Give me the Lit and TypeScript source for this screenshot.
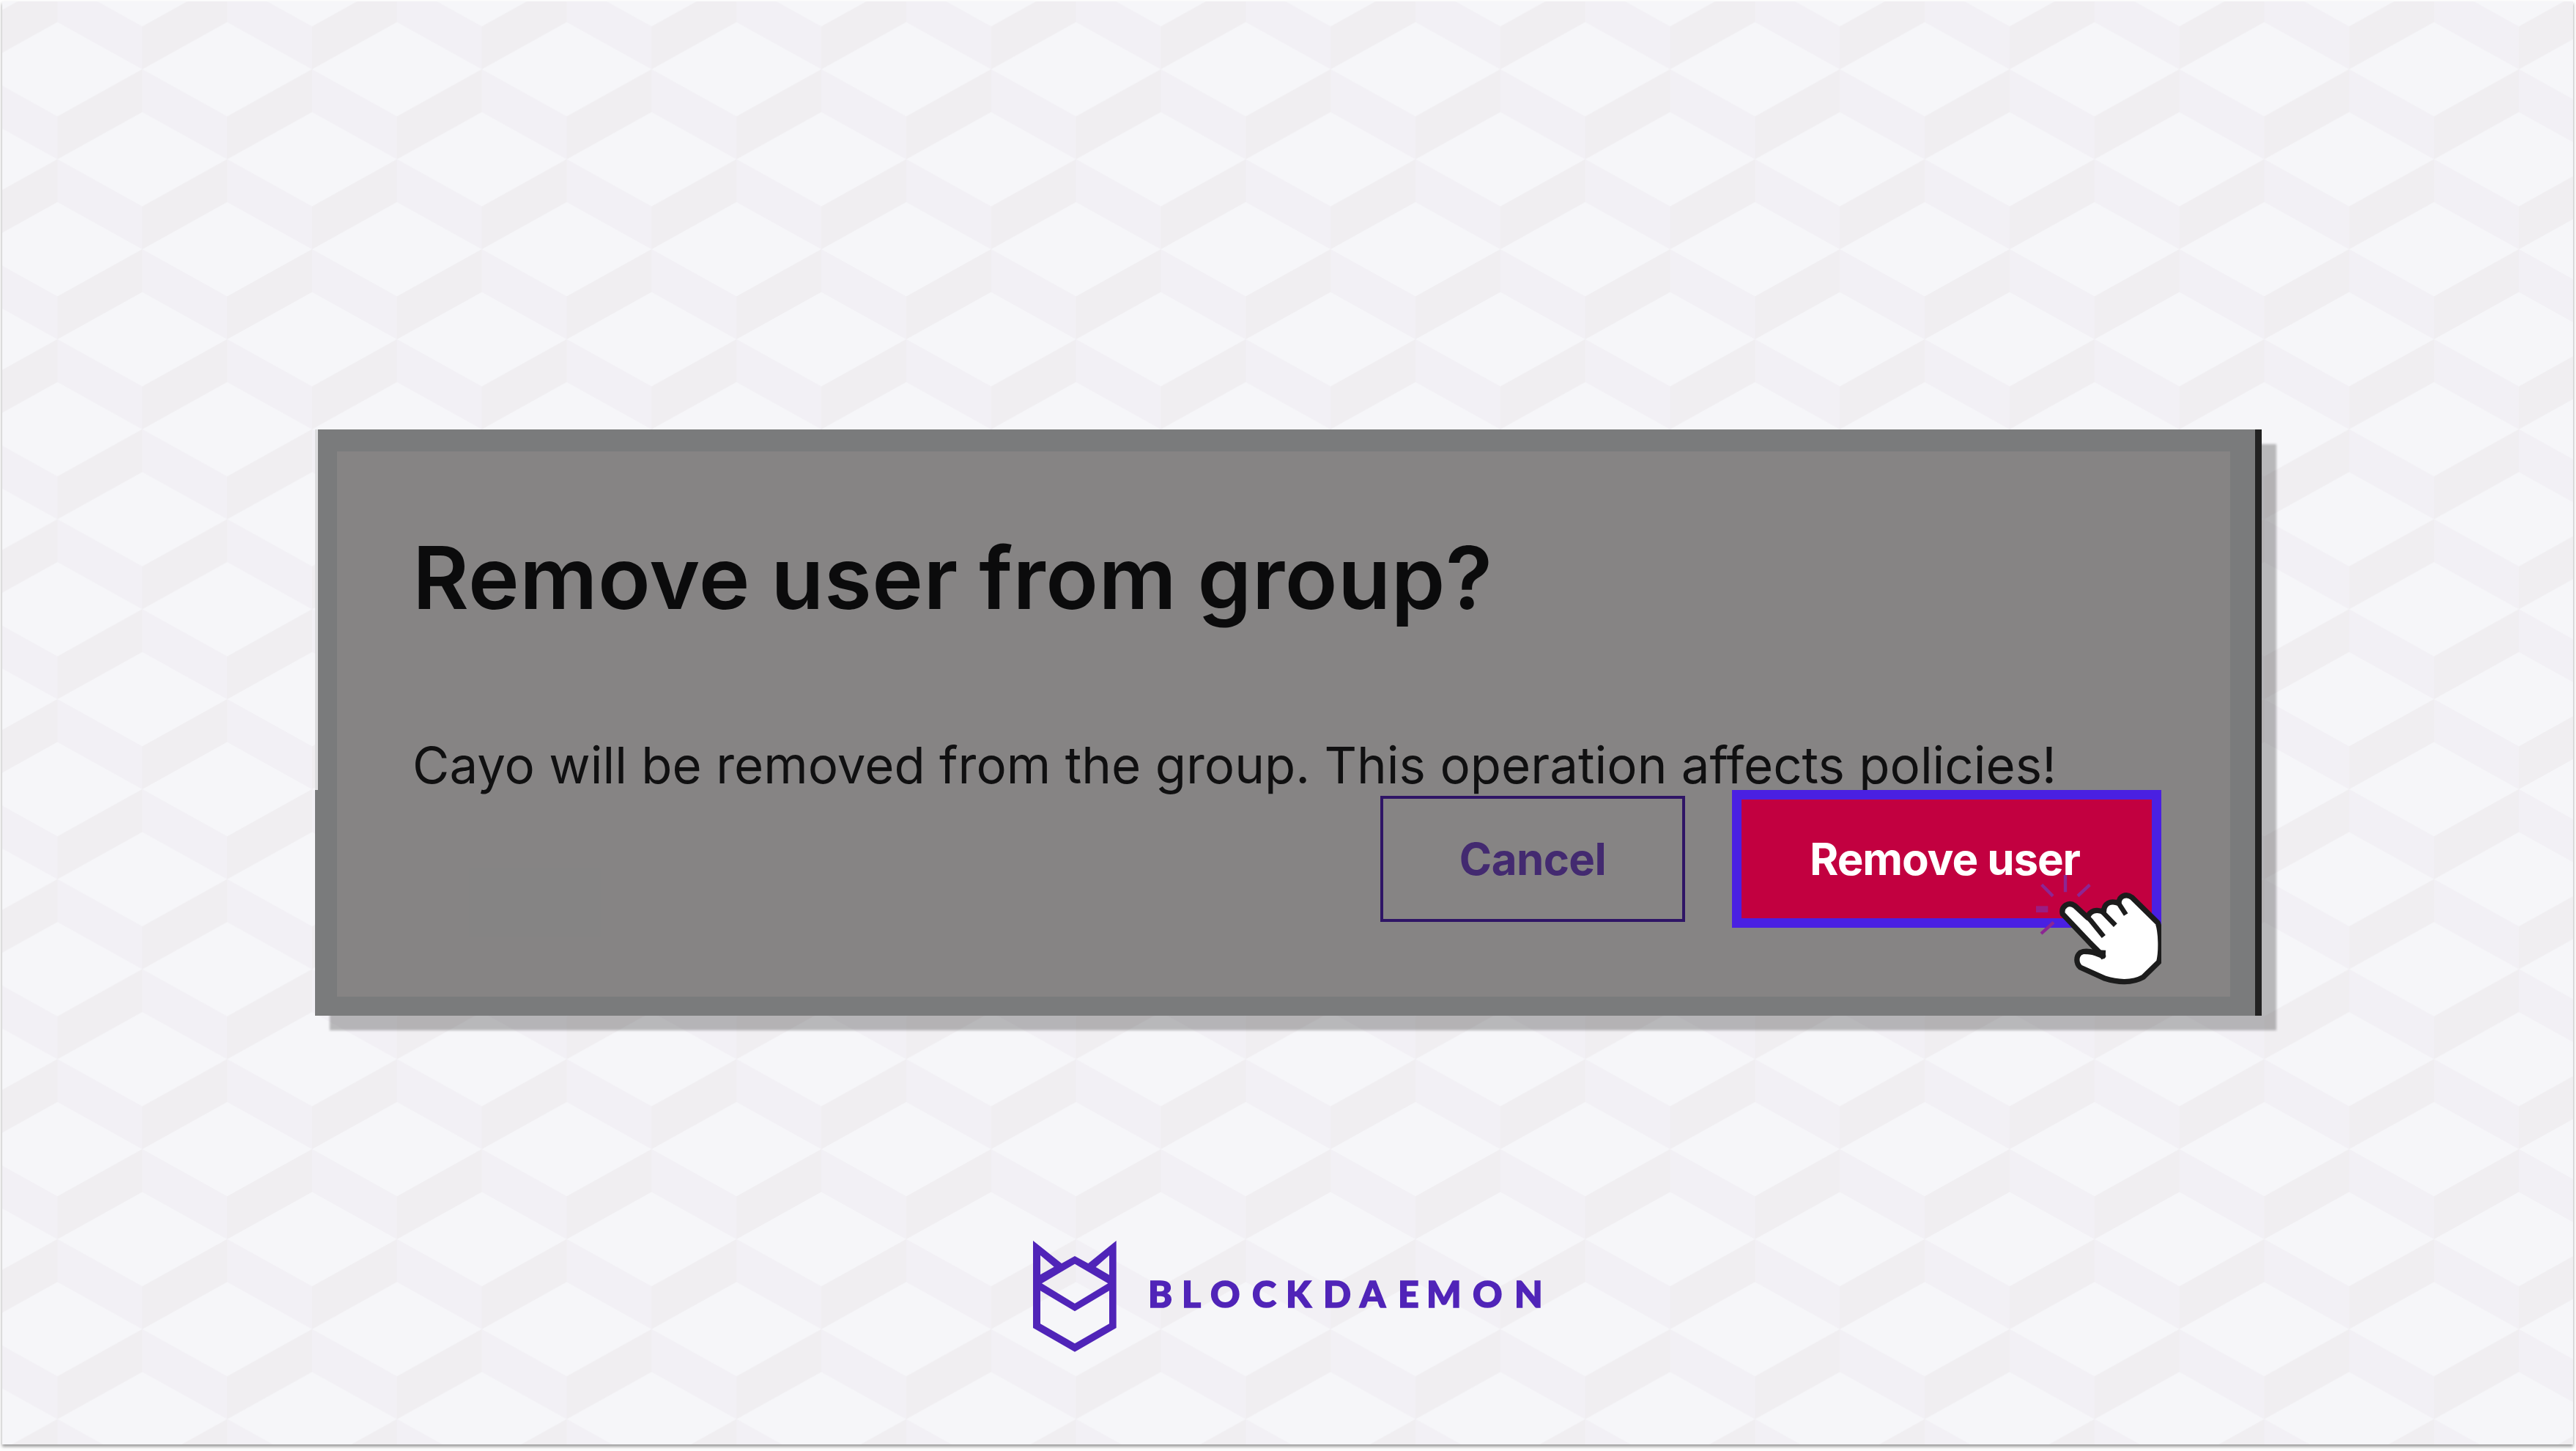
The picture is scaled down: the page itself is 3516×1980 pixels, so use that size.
import { LitElement, html, css } from 'lit';
import { property, customElement } from 'lit/decorators.js';

@customElement('cube-pattern')
class CubePattern extends LitElement {
  static styles = css`
    :host {
      display: block;
    }
    .canvas {
      display: block;
      width: 100%;
      height: 100%;
    }
    .base {
      fill: #f6f6f9;
    }
    .left-face {
      fill: #f2f0f5;
    }
    .right-face {
      fill: #f0eef1;
    }
  `;

  render() {
    return html`
      <svg class="canvas">
        <defs>
          <pattern id="cubes" x="75.4" y="215.3" width="231.7" height="245.6" patternUnits="userSpaceOnUse">
            <rect class="base" width="232" height="246" />
            <path class="left-face" d="M0 0L115.85 64.3V122.8L0 58.5Z M115.85 122.8L231.7 187.1V245.6L115.85 181.3Z" />
            <path class="right-face" d="M231.7 0L115.85 64.3V122.8L231.7 58.5Z M115.85 122.8L0 187.1V245.6L115.85 181.3Z" />
          </pattern>
        </defs>
        <rect width="100%" height="100%" fill="url(#cubes)" />
      </svg>
    `;
  }
}

@customElement('hand-cursor')
class HandCursor extends LitElement {
  static styles = css`
    :host {
      display: block;
      width: 190px;
      height: 170px;
    }
    .icon {
      display: block;
      width: 100%;
      height: 100%;
      fill: none;
      stroke-linejoin: round;
    }
    .ray {
      stroke: #8c2693;
      stroke-width: 13;
    }
    .ray.wide {
      stroke: #9a1d83;
      stroke-width: 26;
    }
    .hand {
      fill: #fff;
      stroke: #1c1c1c;
      stroke-width: 22;
    }
    .gap {
      stroke: #1c1c1c;
      stroke-width: 20;
    }
  `;

  render() {
    return html`
      <svg class="icon" viewBox="0 0 570 510">
        <path class="ray" d="M177 12V82M80 52L126 98M277 52L228 98M129 206L78 252" />
        <path class="ray wide" d="M57 152H106" />
        <path
          class="hand"
          d="M166 172C158 140 190 120 216 138L268 186C278 158 304 150 334 164C334 128 362 114 396 128C396 98 426 86 450 104L556 208C570 250 570 330 560 368L496 430C450 456 390 452 340 436L238 390C220 372 220 345 238 330C262 318 290 326 332 344L276 288Z"
        />
        <path class="gap" d="M262 178L284 202L334 264M328 162L382 218M394 126L425 174M276 288L334 352M250 326L342 330" />
      </svg>
    `;
  }
}

@customElement('confirm-dialog')
class ConfirmDialog extends LitElement {
  @property({ type: String }) heading = '';
  @property({ type: String }) message = '';

  static styles = css`
    :host {
      display: block;
      box-sizing: border-box;
      width: 2657px;
      height: 800px;
      padding: 30px 34px 26px 30px;
      border-right: 9px solid #222;
      background: linear-gradient(#dcdcde 0 492px, #7a7b7c 0) left / 4px 100% no-repeat, #7a7b7c;
      box-shadow: 20px 20px 3px rgba(0, 0, 0, 0.25);
      font-family: Inter, sans-serif;
    }
    .panel {
      display: flex;
      flex-direction: column;
      box-sizing: border-box;
      height: 744px;
      padding: 102px 94px 0 103px;
      background: linear-gradient(#858484, #858484) 180px 569px / 180px 93px no-repeat, #868484;
    }
    .heading {
      margin: 0;
      color: #0b0b0c;
      font-size: 118px;
      font-weight: 600;
      line-height: 140px;
      letter-spacing: 0.5px;
      word-spacing: -2px;
    }
    .message {
      margin: 144px 0 0;
      color: #101011;
      font-size: 69px;
      line-height: 84px;
      white-space: nowrap;
    }
    .actions {
      display: flex;
      justify-content: flex-end;
      align-items: center;
      gap: 64px;
      margin-top: -8px;
    }
    .button {
      position: relative;
      box-sizing: border-box;
      padding: 0;
      background: none;
      font: 700 60px/72px Inter, sans-serif;
    }
    .cancel {
      width: 416px;
      height: 172px;
      border: 4px solid #2f1566;
      color: #432a70;
      letter-spacing: -0.6px;
    }
    .remove {
      width: 586px;
      height: 188px;
      padding-right: 5px;
      border: 13px solid #4a20e2;
      background: #c20040;
      color: #fff;
      letter-spacing: -1.1px;
    }
    .cursor {
      position: absolute;
      left: 383px;
      top: 99px;
    }
  `;

  render() {
    return html`
      <div class="panel">
        <h1 class="heading">${this.heading}</h1>
        <p class="message">${this.message}</p>
        <div class="actions">
          <button class="button cancel">Cancel</button>
          <button class="button remove">
            Remove user
            <hand-cursor class="cursor"></hand-cursor>
          </button>
        </div>
      </div>
    `;
  }
}

@customElement('brand-logo')
class BrandLogo extends LitElement {
  static styles = css`
    :host {
      display: flex;
      gap: 36px;
      fill: #5024b8;
    }
    .mark {
      width: 114px;
      height: 152px;
    }
    .wordmark {
      width: 560px;
      height: 152px;
      font-family: Lato, sans-serif;
      font-size: 50px;
      font-weight: 900;
      stroke: #5024b8;
      stroke-width: 1.6px;
    }
  `;

  render() {
    return html`
      <svg class="mark" viewBox="61 38 342 456">
        <path
          fill-rule="evenodd"
          d="M61 38L178 131L232 101L287 131L402 38V395L232 493L61 395Z M91 98V177L147 145Z M373 98V178L318 146Z M97 213L232 295L368 213L232 133Z M91 243V378L232 459L373 378V243L232 327Z"
        />
      </svg>
      <svg class="wordmark" viewBox="1560 0 560 152">
        <text x="1567 1613 1652 1709 1755 1806 1856 1908 1947 2010 2067" y="91">BLOCKDAEMON</text>
      </svg>
    `;
  }
}

@customElement('app-root')
class AppRoot extends LitElement {
  static styles = css`
    :host {
      display: block;
      box-sizing: border-box;
      height: 1980px;
      padding: 2px 4px 9px 3px;
      background: #fdfdfd;
      overflow: hidden;
    }
    .stage {
      display: flex;
      flex-direction: column;
      position: relative;
      box-sizing: border-box;
      height: 1969px;
      padding: 584px 0 0 427px;
      box-shadow: 0 3px 4px rgba(0, 0, 0, 0.4);
    }
    .backdrop {
      position: absolute;
      inset: 0;
    }
    .dialog,
    .logo {
      position: relative;
    }
    .logo {
      margin: 307px 0 0 980px;
    }
  `;

  render() {
    return html`
      <div class="stage">
        <cube-pattern class="backdrop"></cube-pattern>
        <confirm-dialog
          class="dialog"
          heading="Remove user from group?"
          message="Cayo will be removed from the group. This operation affects policies!"
        ></confirm-dialog>
        <brand-logo class="logo"></brand-logo>
      </div>
    `;
  }
}

declare global {
  interface HTMLElementTagNameMap {
    'app-root': AppRoot;
    'brand-logo': BrandLogo;
    'confirm-dialog': ConfirmDialog;
    'cube-pattern': CubePattern;
    'hand-cursor': HandCursor;
  }
}
